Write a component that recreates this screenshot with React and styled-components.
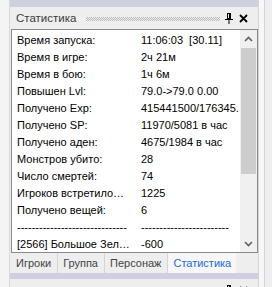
import React from "react";
import styled, { createGlobalStyle } from "styled-components";

const Global = createGlobalStyle`
  html, body { margin: 0; padding: 0; background: #f0f0f0; }
  body { font-family: "Liberation Sans", Arial, sans-serif; }
`;

const Frame = styled.div`
  width: 272px;
  height: 287px;
  display: flex;
  overflow: hidden;
  background: #f0f0f0;
`;

const LeftEdge = styled.div`
  width: 9px;
  background: #f4f4f4;
  border-right: 1px solid #d9d9d9;
`;

const RightEdge = styled.div`
  width: 14px;
  display: flex;
  background: #f0f0f0;
`;

const EdgeLine = styled.div`
  width: ${(p) => p.$w}px;
  border-left: 1px solid #d4d4d4;
  background: ${(p) => p.$bg};
`;

const Panel = styled.div`
  width: 248px;
  display: flex;
  flex-direction: column;
  background: #eeeeee;
`;

const Bar = styled.div`
  height: ${(p) => p.$h}px;
  flex: none;
  background: #cfd0de;
`;

const TitleRow = styled.div`
  height: 22px;
  flex: none;
  display: flex;
  align-items: center;
  padding: 0 6px 0 6px;
`;

const Title = styled.span`
  font-size: 11.5px;
  color: #3c3c3c;
  line-height: 14px;
`;

const Grip = styled.div`
  flex: 1;
  height: 4px;
  margin: 1px 4px 0 10px;
  background-image: conic-gradient(#b9b9b9 25%, transparent 0 50%, #b9b9b9 0 75%, transparent 0);
  background-size: 2px 2px;
`;

const IconBtn = styled.span`
  display: flex;
  align-items: center;
  justify-content: center;
  width: ${(p) => p.$w}px;
  height: 14px;
`;

const Box = styled.div`
  flex: none;
  height: 224px;
  margin-left: 1px;
  box-sizing: border-box;
  border: 1px solid #8a8a8a;
  background: #ffffff;
  display: flex;
`;

const List = styled.div`
  flex: 1;
  padding: 2px 0 0 5px;
  display: grid;
  grid-template-columns: 124px 1fr;
  grid-auto-rows: 17px;
  align-content: start;
  font-size: 11px;
  line-height: 17px;
  color: #000;
  overflow: hidden;
`;

const Cell = styled.span`
  white-space: pre;
  overflow: hidden;
`;

const Scroll = styled.div`
  width: 17px;
  flex: none;
  display: flex;
  flex-direction: column;
  background: #f0f0f0;
`;

const Arrow = styled.div`
  height: 17px;
  display: flex;
  align-items: center;
  justify-content: center;
  flex: none;
`;

const Track = styled.div`
  flex: 1;
  display: flex;
  flex-direction: column;
`;

const Thumb = styled.div`
  height: 126px;
  margin: 1px 1px 0 1px;
  background: #cdcdcd;
`;

const Tabs = styled.div`
  height: 20px;
  flex: none;
  display: flex;
  margin-left: 1px;
`;

const Tab = styled.div`
  display: flex;
  align-items: center;
  padding: 0 ${(p) => (p.$active ? 5 : 6)}px 1px 5px;
  font-size: 11px;
  color: ${(p) => (p.$active ? "#1a6dd6" : "#444")};
  background: ${(p) => (p.$active ? "#f7f7f7" : "transparent")};
  border-right: ${(p) => (p.$active ? "none" : "1px solid #d6d6d6")};
`;

const Gap = styled.div`
  height: 4px;
  flex: none;
`;

const NextTitle = styled.div`
  height: 22px;
  flex: none;
  display: flex;
  justify-content: flex-end;
  align-items: flex-start;
  padding-right: 6px;
`;

const Pin = () => (
  <svg width="8" height="11" viewBox="0 0 8 11">
    <rect x="2.5" y="0.5" width="3" height="5" fill="none" stroke="#000" />
    <rect x="4" y="1" width="1.5" height="4.5" fill="#000" />
    <rect x="0" y="6" width="8" height="1" fill="#000" />
    <rect x="3.5" y="7" width="1" height="4" fill="#000" />
  </svg>
);

const Close = () => (
  <svg width="9" height="9" viewBox="0 0 9 9">
    <path d="M1 1 L8 8 M8 1 L1 8" stroke="#000" strokeWidth="1.8" />
  </svg>
);

const Chevron = ({ up }) => (
  <svg width="9" height="6" viewBox="0 0 9 6">
    <path
      d={up ? "M1 5 L4.5 1.5 L8 5" : "M1 1 L4.5 4.5 L8 1"}
      stroke="#606060"
      strokeWidth="1.6"
      fill="none"
    />
  </svg>
);

const rows = [
  ["Время запуска:", "11:06:03  [30.11]"],
  ["Время в игре:", "2ч 21м"],
  ["Время в бою:", "1ч 6м"],
  ["Повышен Lvl:", "79.0->79.0 0.00"],
  ["Получено Exp:", "415441500/176345."],
  ["Получено SP:", "11970/5081 в час"],
  ["Получено аден:", "4675/1984 в час"],
  ["Монстров убито:", "28"],
  ["Число смертей:", "74"],
  ["Игроков встретило…", "1225"],
  ["Получено вещей:", "6"],
  ["------------------------------", "------------------------"],
  ["[2566] Большое Зел…", "-600"],
];

const tabs = ["Игроки", "Группа", "Персонаж", "Статистика"];

export default function App() {
  return (
    <>
      <Global />
      <Frame>
        <LeftEdge />
        <Panel>
          <Bar $h={7} />
          <TitleRow>
            <Title>Статистика</Title>
            <Grip />
            <IconBtn $w={10}>
              <Pin />
            </IconBtn>
            <IconBtn $w={18}>
              <Close />
            </IconBtn>
          </TitleRow>
          <Box>
            <List>
              {rows.map(([k, v], i) => (
                <React.Fragment key={i}>
                  <Cell>{k}</Cell>
                  <Cell>{v}</Cell>
                </React.Fragment>
              ))}
            </List>
            <Scroll>
              <Arrow>
                <Chevron up />
              </Arrow>
              <Track>
                <Thumb />
              </Track>
              <Arrow>
                <Chevron />
              </Arrow>
            </Scroll>
          </Box>
          <Tabs>
            {tabs.map((t, i) => (
              <Tab key={t} $active={i === 3}>
                {t}
              </Tab>
            ))}
          </Tabs>
          <Bar $h={6} />
          <Gap />
          <NextTitle>
            <IconBtn $w={10}>
              <Pin />
            </IconBtn>
            <IconBtn $w={18}>
              <Close />
            </IconBtn>
          </NextTitle>
        </Panel>
        <RightEdge>
          <EdgeLine $w={6} $bg="#f7f7f7" />
          <EdgeLine $w={8} $bg="#eeeeee" />
        </RightEdge>
      </Frame>
    </>
  );
}
